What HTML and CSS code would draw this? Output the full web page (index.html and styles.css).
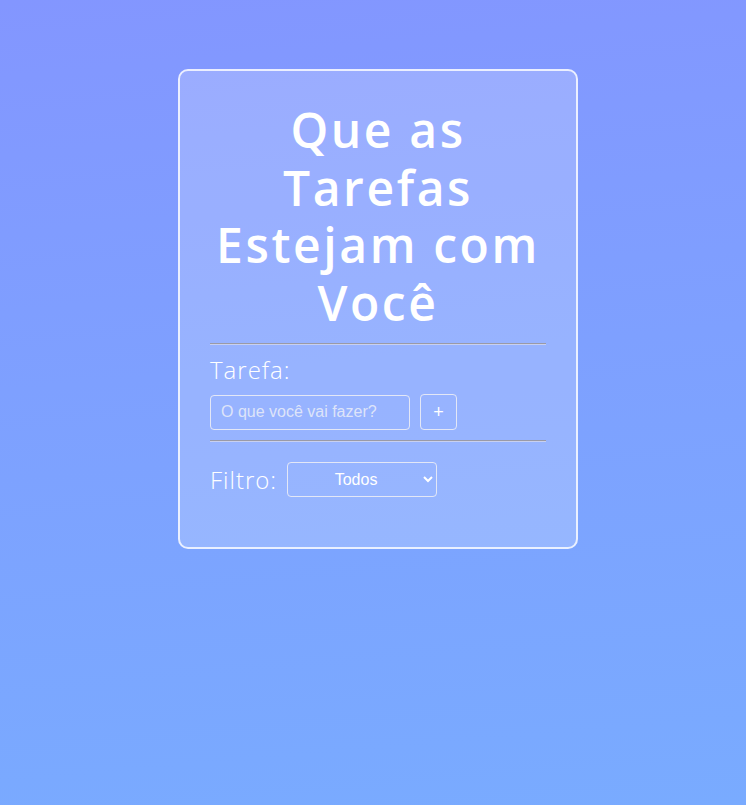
FILE: index.html
```html
<!DOCTYPE html>
<html lang="pt-BR">
<head>
<meta charset="utf-8">
<title>Que as Tarefas Estejam com Você</title>
<link rel="stylesheet" href="styles.css">
</head>
<body>
<main class="page">
  <section class="card">
    <h1 class="title">Que as Tarefas Estejam com Você</h1>
    <hr class="divider">
    <label class="label" for="task">Tarefa:</label>
    <div class="task-row">
      <input class="task-input" id="task" type="text" placeholder="O que você vai fazer?">
      <button class="add-btn" type="button">+</button>
    </div>
    <hr class="divider">
    <div class="filter-row">
      <label class="label filter-label" for="filter">Filtro:</label>
      <select class="filter-select" id="filter">
        <option>Todos</option>
        <option>Completos</option>
        <option>Incompletos</option>
      </select>
    </div>
  </section>
</main>
</body>
</html>
```
FILE: styles.css
```css
* { box-sizing: border-box; }
html, body { margin: 0; height: 100%; }
body {
  background: linear-gradient(175deg, #8396ff 0%, #7ea0ff 45%, #79abff 100%);
  font-family: "Open Sans", "DejaVu Sans", sans-serif;
  color: #fff;
}
.page {
  display: flex;
  justify-content: center;
  padding: 69px 0 0 10px;
}
.card {
  width: 400px;
  padding: 30px 30px 50px;
  border: 2px solid rgba(255, 255, 255, 0.8);
  border-radius: 10px;
  background: rgba(255, 255, 255, 0.2);
}
.title {
  margin: 0 0 12px;
  font-size: 48px;
  line-height: 57.6px;
  font-weight: 600;
  text-align: center;
  letter-spacing: 2.6px;
}
.divider {
  margin: 0;
  border: 0;
  border-top: 1px solid #9a9aa6;
  border-bottom: 1px solid #c8d0f0;
}
.label {
  display: block;
  margin-top: 10px;
  font-size: 24px;
  line-height: 30px;
  font-weight: 300;
  letter-spacing: 1px;
}
.task-row {
  display: flex;
  align-items: center;
  gap: 10px;
  margin: 9px 0 10px;
}
.task-input {
  width: 200px;
  height: 35px;
  padding: 0 10px;
  border: 1px solid rgba(240, 240, 245, 0.85);
  border-radius: 4px;
  background: transparent;
  color: #fff;
  font-family: "Liberation Sans", Arial, sans-serif;
  font-size: 16px;
}
.task-input::placeholder { color: rgba(235, 238, 248, 0.85); }
.add-btn {
  width: 37px;
  height: 36px;
  padding: 0;
  border: 1px solid rgba(240, 240, 245, 0.85);
  border-radius: 4px;
  background: transparent;
  color: #fff;
  font-family: "Liberation Sans", Arial, sans-serif;
  font-size: 18px;
}
.filter-row {
  display: flex;
  align-items: center;
  gap: 10px;
  margin-top: 20px;
}
.filter-label { margin-top: 0; }
.filter-select {
  width: 150px;
  height: 35px;
  border: 1px solid rgba(240, 240, 245, 0.85);
  border-radius: 4px;
  background: transparent;
  color: #fff;
  font-family: "Liberation Sans", Arial, sans-serif;
  font-size: 16px;
  font-weight: 400;
  text-align: center;
  text-align-last: center;
}
.filter-select option { color: #000; }
```
